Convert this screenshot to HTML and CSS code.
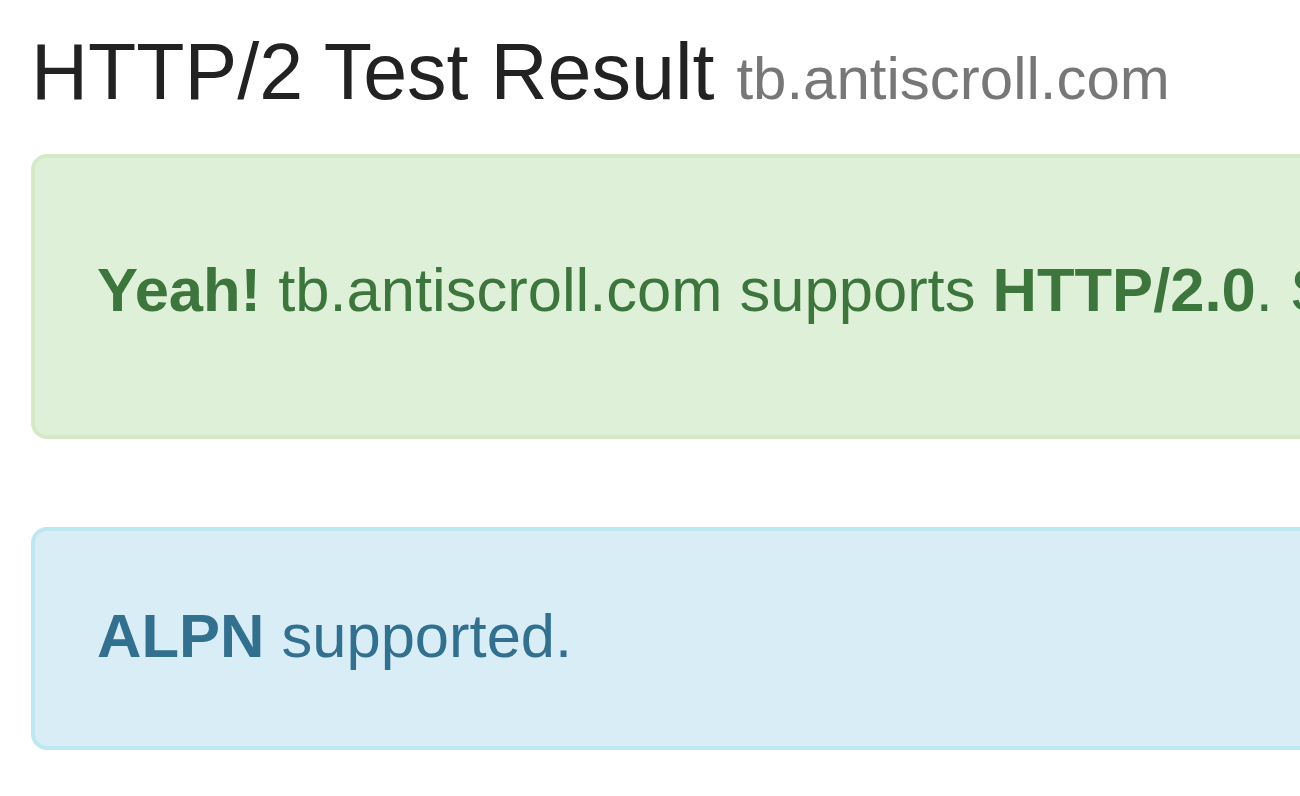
FILE: index.html
```html
<!DOCTYPE html>
<html lang="en">
    <head>
        <title>HTTP/2 Test Result</title>
        <meta charset="utf-8" />
        <meta name="viewport" content="width=device-width, initial-scale=1">
        <link rel="stylesheet" href="styles.css">
    </head>
    <body>
        <div class="container">
            <h1>HTTP/2 Test Result <small>tb.antiscroll.com</small></h1>
            <div class="alert alert-success">
                <strong>Yeah!</strong> tb.antiscroll.com supports <strong>HTTP/2.0</strong>. See the details below.
            </div>
            <div class="alert alert-info">
                <strong>ALPN</strong> supported.
            </div>
        </div>
    </body>
</html>
```

FILE: styles.css
```css
html, body { overflow: hidden; }
body {
    margin: 0;
    background-color: white;
    color: #333;
    font-family: "Liberation Sans", Arial, Helvetica, sans-serif;
    font-size: 61.5px;
    line-height: 86px;
}
.container {
    width: 1900px;
    padding: 29px 31px 0 31px;
}
h1 {
    margin: 0 0 39px 0;
    font-size: 79px;
    font-weight: normal;
    line-height: 86px;
    color: #222;
    white-space: nowrap;
}
h1 small { font-size: 60px; line-height: 1; color: #777; }
.alert {
    border: 4px solid transparent;
    border-radius: 16px;
    white-space: nowrap;
}
.alert strong { font-weight: bold; }
.alert-success {
    background-color: #dff0d8;
    border-color: #d6e9c6;
    color: #3c763d;
    padding: 89px 62px 102px 62px;
    margin-bottom: 88px;
}
.alert-info {
    background-color: #d9edf7;
    border-color: #bce8f1;
    color: #31708f;
    padding: 62px 62px 67px 62px;
}
```
